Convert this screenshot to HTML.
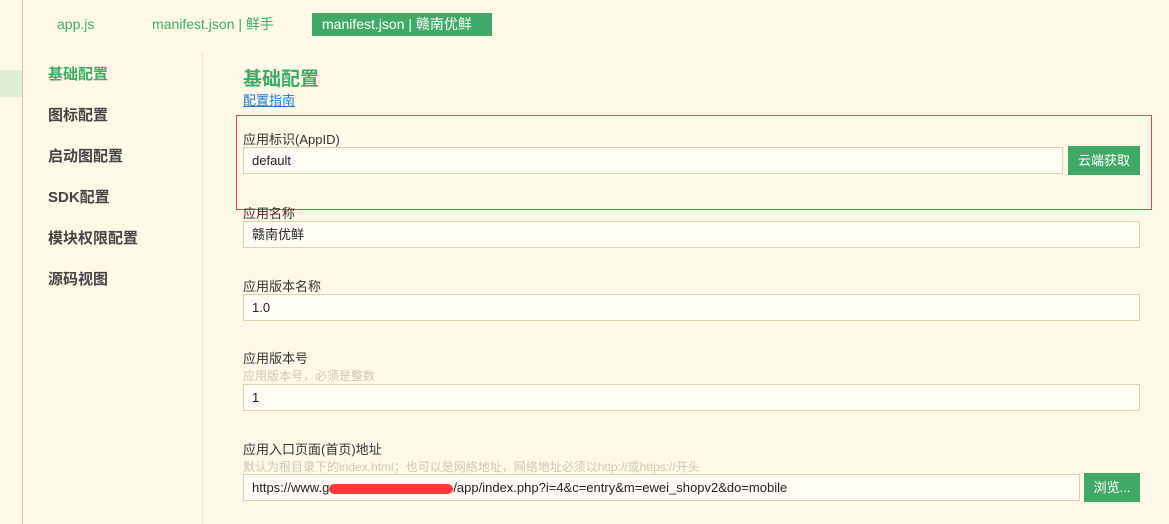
<!DOCTYPE html>
<html><head><meta charset="utf-8"><style>
*{box-sizing:border-box;margin:0;padding:0}
body{width:1169px;height:524px;background:#fef9e6;font-family:"Liberation Sans","Noto Sans CJK SC",sans-serif;position:relative;overflow:hidden;color:#333;font-size:13px}
.abs{position:absolute}
.tab{position:absolute;top:13px;height:23px;line-height:23px;font-size:14px;color:#3dab66}
.nav{position:absolute;left:48px;font-size:15px;font-weight:bold;color:#444}
.lbl{position:absolute;left:243px;font-size:13px;color:#333}
.hint{position:absolute;left:243px;font-size:12px;color:#cfc8b0}
.inp{position:absolute;left:243px;height:27px;background:#fffdf5;border:1px solid #ddd3a8;padding-left:8px;line-height:25px;font-size:13px;color:#222}
.btn{position:absolute;background:#40a965;color:#fff;font-size:13px;text-align:center;line-height:29px;height:29px}
</style></head><body>
<div class="abs" style="left:0;top:70px;width:22px;height:27px;background:#dfeed5"></div>
<div class="abs" style="left:22px;top:0;width:1px;height:524px;background:#d8c88a"></div>
<div class="abs" style="left:202px;top:52px;width:1px;height:472px;background:#efe5c4"></div>
<div class="tab" style="left:57px">app.js</div>
<div class="tab" style="left:152px">manifest.json | 鲜手</div>
<div class="tab" style="left:312px;width:180px;background:#40a965;color:#fff;padding-left:10px">manifest.json | 赣南优鲜</div>
<div class="nav" style="top:63px;color:#3dab66">基础配置</div>
<div class="nav" style="top:104px">图标配置</div>
<div class="nav" style="top:145px">启动图配置</div>
<div class="nav" style="top:186px">SDK配置</div>
<div class="nav" style="top:227px">模块权限配置</div>
<div class="nav" style="top:268px">源码视图</div>
<div class="abs" style="left:243px;top:64px;font-size:19px;font-weight:bold;color:#3dab66">基础配置</div>
<div class="abs" style="left:243px;top:90px;font-size:13px;color:#1a7ad6;text-decoration:underline">配置指南</div>
<div class="abs" style="left:236px;top:115px;width:916px;height:95px;border:1px solid #e04444"></div>
<div class="lbl" style="top:129px">应用标识(AppID)</div>
<div class="inp" style="top:147px;width:820px">default</div>
<div class="btn" style="left:1068px;top:146px;width:72px">云端获取</div>
<div class="lbl" style="top:203px">应用名称</div>
<div class="inp" style="top:221px;width:897px">赣南优鲜</div>
<div class="lbl" style="top:276px">应用版本名称</div>
<div class="inp" style="top:294px;width:897px">1.0</div>
<div class="lbl" style="top:348px">应用版本号</div>
<div class="hint" style="top:367px">应用版本号，必须是整数</div>
<div class="inp" style="top:384px;width:897px">1</div>
<div class="lbl" style="top:439px">应用入口页面(首页)地址</div>
<div class="hint" style="top:458px">默认为根目录下的index.html；也可以是网络地址，网络地址必须以http://或https://开头</div>
<div class="inp" style="top:474px;width:837px">https://www.g<span style="display:inline-block;width:124px;height:10px;background:#ff3a3a;border-radius:5px;vertical-align:middle"></span>/app/index.php?i=4&amp;c=entry&amp;m=ewei_shopv2&amp;do=mobile</div>
<div class="btn" style="left:1084px;top:473px;width:56px">浏览...</div>
</body></html>
